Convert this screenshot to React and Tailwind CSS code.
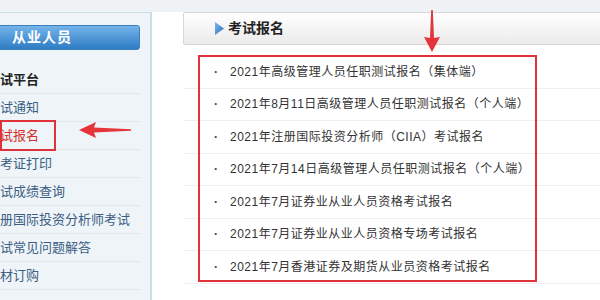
const sideItems = [
  { label: '考试平台', kind: 'title' },
  { label: '考试通知' },
  { label: '考试报名', kind: 'active' },
  { label: '准考证打印' },
  { label: '考试成绩查询' },
  { label: '注册国际投资分析师考试' },
  { label: '考试常见问题解答' },
  { label: '教材订购' },
];

const examLinks = [
  '2021年高级管理人员任职测试报名（集体端）',
  '2021年8月11日高级管理人员任职测试报名（个人端）',
  '2021年注册国际投资分析师（CIIA）考试报名',
  '2021年7月14日高级管理人员任职测试报名（个人端）',
  '2021年7月证券业从业人员资格考试报名',
  '2021年7月证券业从业人员资格专场考试报名',
  '2021年7月香港证券及期货从业员资格考试报名',
];

const font = { fontFamily: '"Liberation Sans", "Noto Sans CJK SC", sans-serif' };

const Sidebar = () => (
  <div className="-ml-[64px] w-[216px] h-[300px] shrink-0 bg-[#eef4f8] border-t border-r-2 border-[#cbdde8] px-[10px] pt-[12px]">
    <div className="h-[25px] rounded-[3px] bg-gradient-to-b from-[#74b4ea] to-[#2d7cc4] border border-[#3a80bd] flex items-center pl-[65px] text-white text-[14px] font-bold tracking-[1px]">
      从业人员
    </div>
    <div className="mt-[16px]">
      {sideItems.map((item) => (
        <div
          key={item.label}
          className="h-[28px] flex items-center border-b border-[#dfe8ee] pl-[41px] text-[13px] whitespace-nowrap"
        >
          <span
            className={
              item.kind === 'title'
                ? 'font-bold text-[#222]'
                : item.kind === 'active'
                ? 'text-[#d6302c]'
                : 'text-[#3b5e82]'
            }
          >
            {item.label}
          </span>
        </div>
      ))}
    </div>
  </div>
);

const MainPanel = () => (
  <div className="ml-[31px] flex-1 min-w-0">
    <div className="h-[33px] -mr-[10px] rounded-[2px] border border-[#d6d6d6] bg-gradient-to-b from-white to-[#ebebeb] flex items-center pl-[31px]">
      <svg width="9" height="13" viewBox="0 0 9 13" className="mr-[4px]">
        <defs>
          <linearGradient id="tri" x1="0" y1="0" x2="1" y2="1">
            <stop offset="0" stopColor="#7fb8ec" />
            <stop offset="1" stopColor="#2a6fc0" />
          </linearGradient>
        </defs>
        <path d="M0 0 L9 6.5 L0 13 Z" fill="url(#tri)" />
      </svg>
      <span className="text-[14px] font-bold text-[#222]">考试报名</span>
    </div>
    <ul className="mt-[11px]">
      {examLinks.map((t) => (
        <li
          key={t}
          className="h-[32.5px] flex items-center border-b border-[#efefef] pl-[31px] text-[12px] text-[#333] whitespace-nowrap"
        >
          <span className="w-[16px] shrink-0 text-[#444] font-bold">·</span>
          <span className="tracking-[0.5px]">{t}</span>
        </li>
      ))}
    </ul>
  </div>
);

export default function App() {
  return (
    <div
      className="relative w-[600px] h-[300px] overflow-hidden flex bg-gradient-to-b from-[#eef2f5] to-white"
      style={font}
    >
      <div className="absolute inset-x-0 top-[12px] bottom-0 bg-white" />
      <div className="relative flex w-full pt-[12px]">
        <Sidebar />
        <MainPanel />
      </div>

      {/* annotations */}
      <div className="absolute left-0 top-[120px] w-[56px] h-[31px] border-2 border-[#e0323a]" />
      <svg className="absolute left-[79px] top-[122px]" width="54" height="16" viewBox="0 0 54 16">
        <path d="M0 8 L17 0 L15 5.5 L52 7.3 L52 8.7 L15 10.5 L17 16 Z" fill="#e5353b" />
      </svg>
      <div className="absolute left-[198px] top-[55px] w-[339px] h-[227px] border-2 border-[#e0323a]" />
      <svg className="absolute left-[424px] top-[10px]" width="16" height="42" viewBox="0 0 16 42">
        <path d="M7.2 0 L8.8 0 L10 28 L16 27 L8 42 L0 27 L6 28 Z" fill="#e5353b" />
      </svg>
    </div>
  );
}
